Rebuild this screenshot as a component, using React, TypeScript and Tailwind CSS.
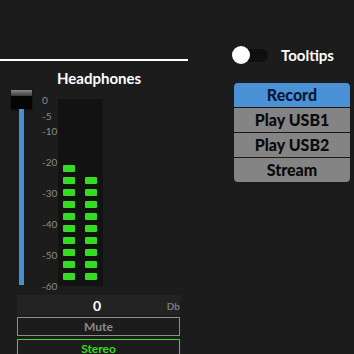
import React from "react";

const scale = [0, -5, -10, -20, -30, -40, -50, -60];
const leftLeds = 10;
const rightLeds = 9;
const outputs = ["Record", "Play USB1", "Play USB2", "Stream"];

const font = { fontFamily: "Lato, 'Liberation Sans', sans-serif" };

const Led = ({ on }: { on: boolean }) => (
  <div className={on ? "w-[12px] h-[7px] rounded-[1px] bg-[#35dc22]" : "w-[12px] h-[7px]"} />
);

const Meter = () => (
  <div className="w-[45px] h-[187px] bg-[#121212] flex gap-[10px] pl-[5px] pb-[6px] items-end">
    {[leftLeds, rightLeds].map((count, c) => (
      <div key={c} className="flex flex-col gap-[5px]">
        {Array.from({ length: count }).map((_, i) => (
          <Led key={i} on />
        ))}
      </div>
    ))}
  </div>
);

const Fader = () => (
  <div className="w-[21px] flex flex-col items-center">
    <div className="w-[21px] h-[19px] flex flex-col shadow-[0_1px_2px_rgba(0,0,0,0.6)]">
      <div className="h-[6px] bg-gradient-to-b from-[#8a8a8a] to-[#3a3a3a]" />
      <div className="flex-1 bg-[#050505]" />
    </div>
    <div className="w-[5px] h-[176px] bg-[#4a8fd1]" />
  </div>
);

const Scale = () => (
  <div className="relative w-[16px] h-[187px] text-[10px] text-[#8a8a8a]">
    {scale.map((db) => (
      <div
        key={db}
        className="absolute left-0 leading-[10px]"
        style={{ top: 1 + -db * 3.1 }}
      >
        {db}
      </div>
    ))}
  </div>
);

const Channel = () => (
  <div className="shrink-0 flex flex-col items-center">
    <div className="h-[20px] leading-[20px] text-[15px] font-bold text-white mt-[7px] ml-[10px]">
      Headphones
    </div>
    <div className="flex self-start ml-[11px] mt-[2px]">
      <Fader />
      <div className="ml-[10px] mt-[4px]">
        <Scale />
      </div>
      <div className="mt-[9px]">
        <Meter />
      </div>
    </div>
    <div className="self-start ml-[17px] mt-[9px] w-[163px] flex flex-col">
      <div className="h-[20px] bg-[#232323] relative flex items-center justify-center">
        <span className="text-[14px] font-bold text-white ml-[-3px]">0</span>
        <span className="absolute right-[0px] top-[5px] leading-[12px] text-[10px] font-bold text-[#7a7a7a]">Db</span>
      </div>
      <div className="mt-[2px] h-[19px] border border-[#8d8d8d] flex items-center justify-center text-[12px] font-bold text-[#8a8a8a]">
        Mute
      </div>
      <div className="mt-[3px] h-[19px] border border-[#35dc22] flex items-center justify-center text-[12px] font-bold text-[#35dc22]">
        Stereo
      </div>
    </div>
  </div>
);

const Toggle = () => (
  <div className="relative w-[36px] h-[18px] flex items-center">
    <div className="ml-[4px] w-[32px] h-[13px] rounded-full bg-[#0f0f0f]" />
    <div className="absolute left-0 top-0 w-[18px] h-[18px] rounded-full bg-white" />
  </div>
);

const Outputs = () => (
  <div className="w-[116px] rounded-[4px] overflow-hidden bg-[#1a1a1a] flex flex-col gap-px">
    {outputs.map((name, i) => (
      <div
        key={name}
        className={
          i === 0
            ? "h-[24px] bg-[#4b91d6] text-[#0c1838] flex items-center justify-center text-[16px] font-black"
            : "h-[24px] bg-[#848484] text-[#0a0a0a] flex items-center justify-center text-[16px] font-black"
        }
      >
        {name}
      </div>
    ))}
  </div>
);

export default function App() {
  return (
    <div className="w-[354px] h-[354px] bg-[#1c1c1c] overflow-hidden flex" style={font}>
      <div className="w-[188px] pt-[59px] flex flex-col">
        <div className="h-[2px] shrink-0 bg-white" />
        <Channel />
      </div>
      <div className="flex-1 pt-[44px] pl-[44px] flex flex-col">
        <div className="flex items-center">
          <Toggle />
          <span className="ml-[13px] text-[15px] font-bold text-white">Tooltips</span>
        </div>
        <div className="mt-[16px] ml-[2px]">
          <Outputs />
        </div>
      </div>
    </div>
  );
}
